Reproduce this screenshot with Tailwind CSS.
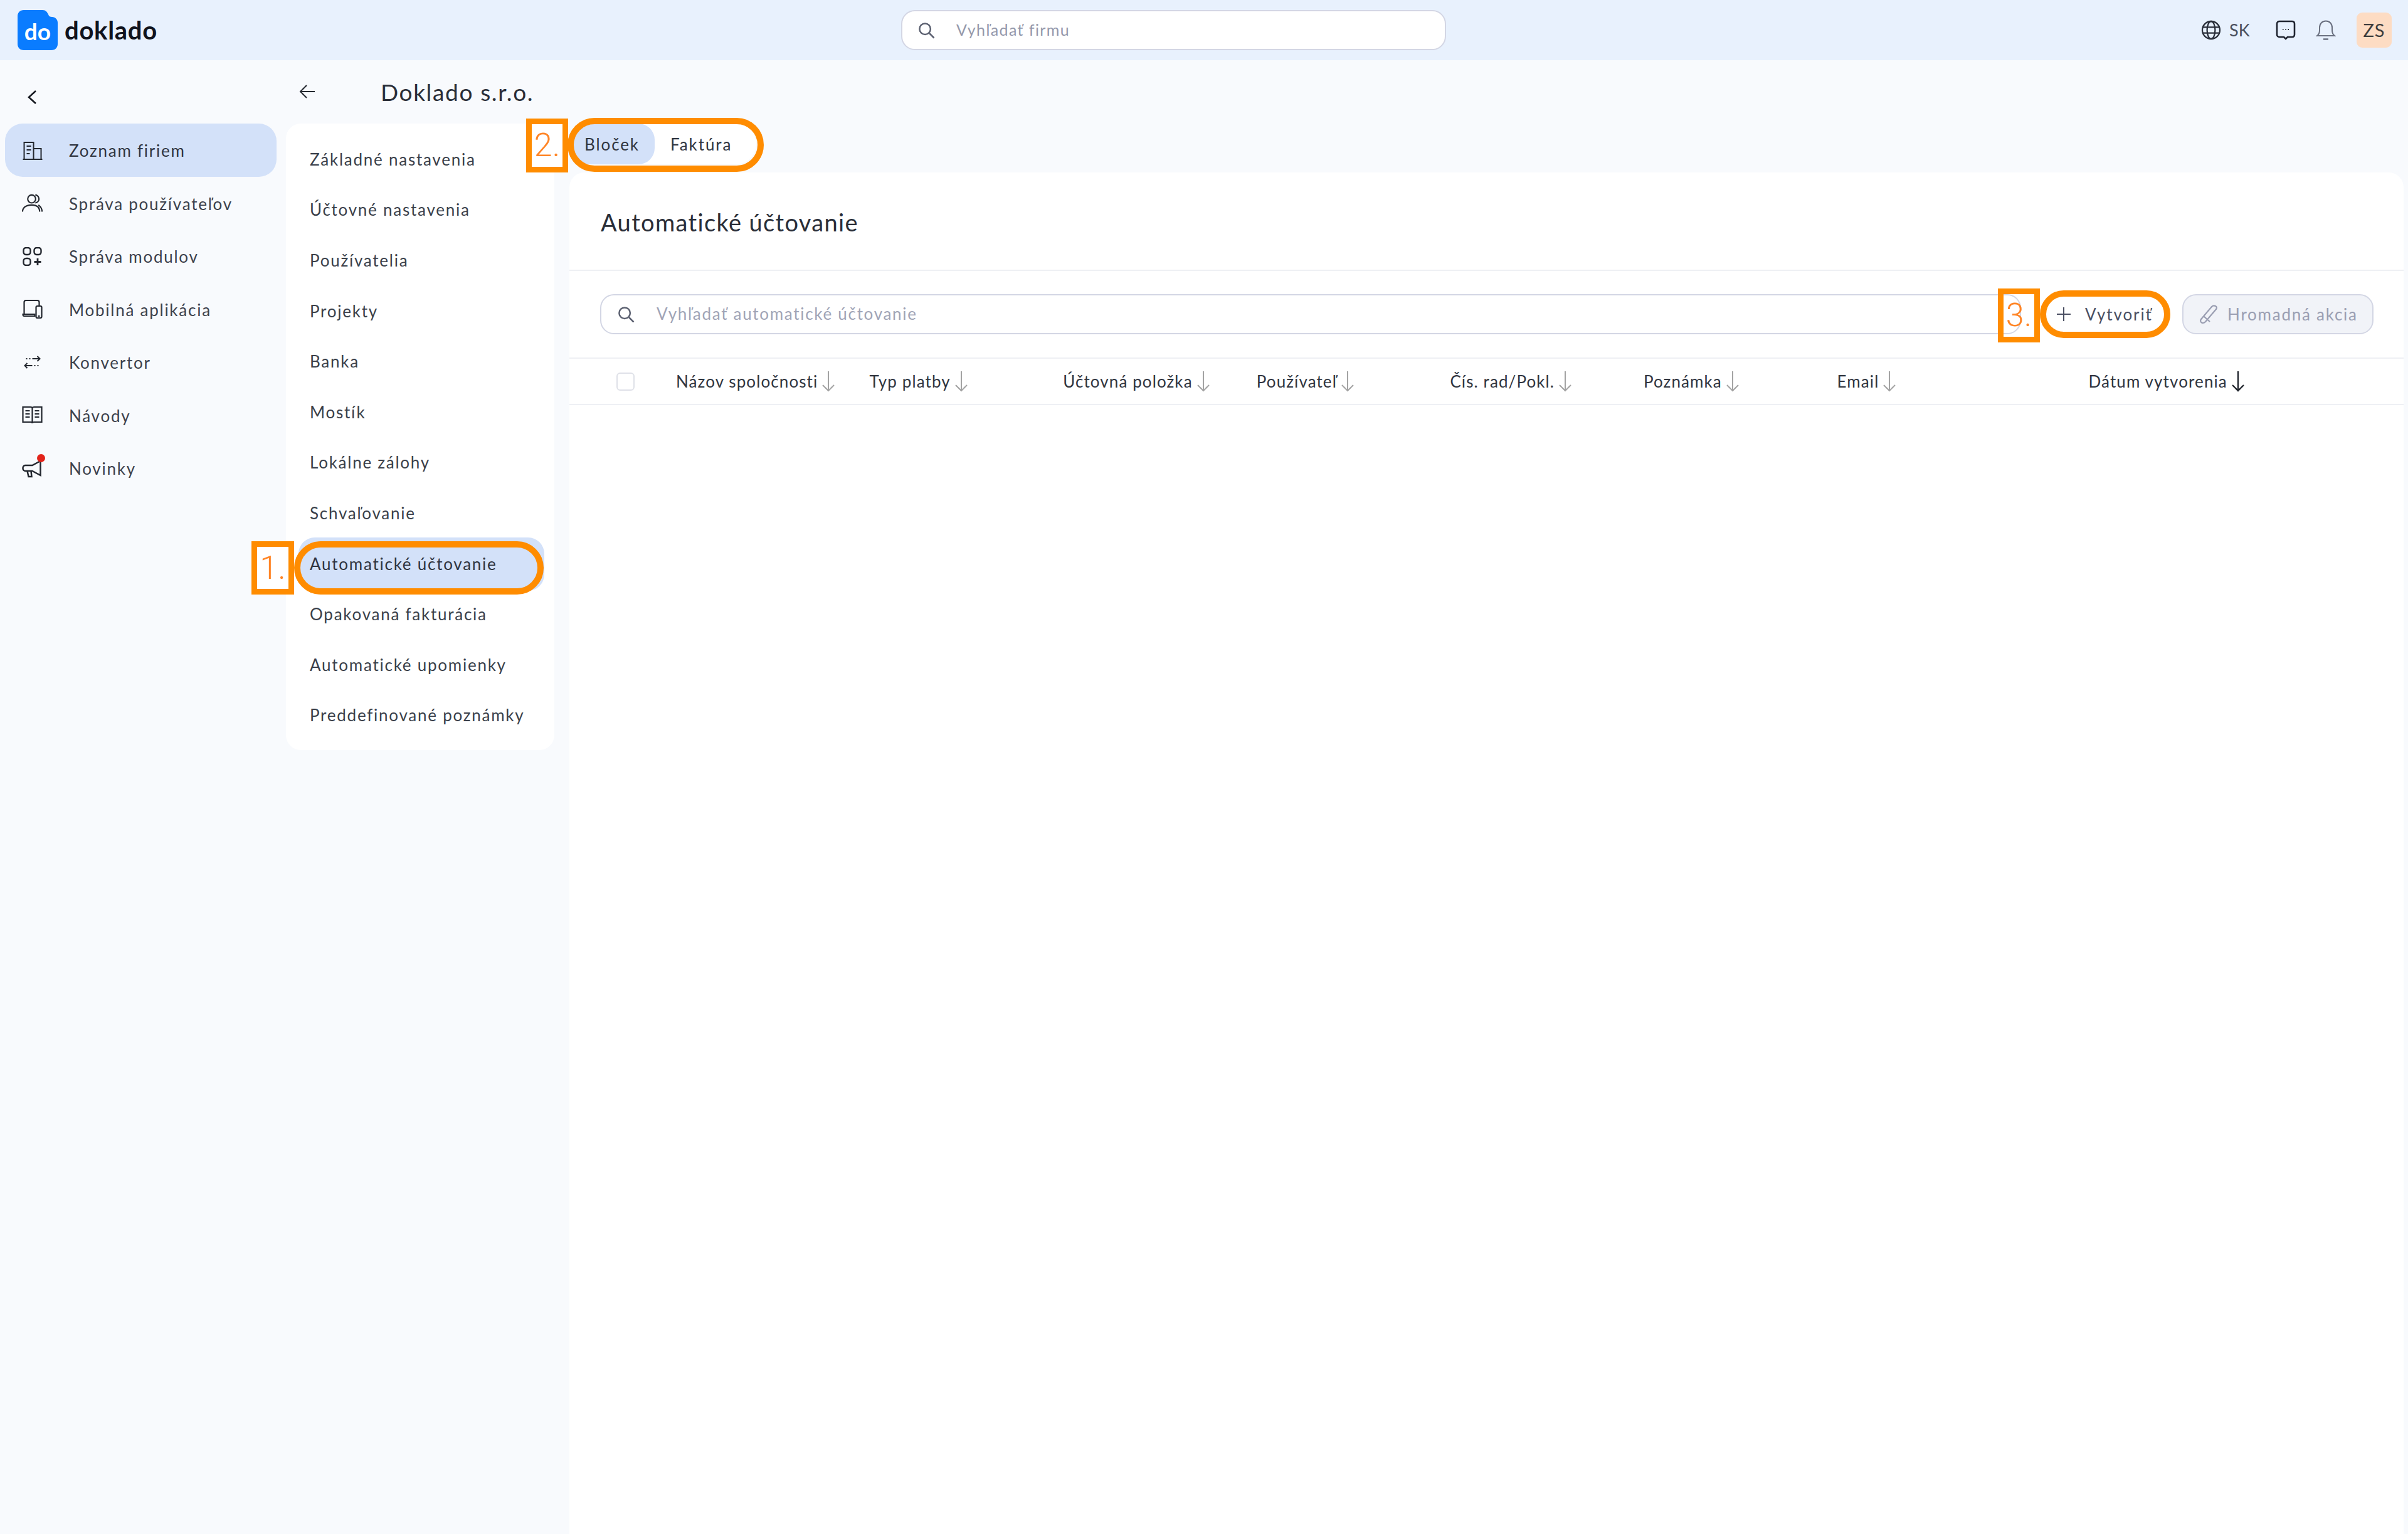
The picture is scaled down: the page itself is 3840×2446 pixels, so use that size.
<!DOCTYPE html>
<html lang="sk"><head><meta charset="utf-8"><title>Doklado</title>
<script src="https://cdn.jsdelivr.net/npm/@tailwindcss/browser@4"></script></head>
<body class="m-0 bg-[#f8fafd] font-['Lato','Noto_Sans',sans-serif] text-[#30353f]">
<div class="relative w-[3840px] h-[2446px] overflow-hidden flex flex-col">

<header class="h-[96px] shrink-0 bg-[#e8f1fd] flex items-center pl-[28px] pr-[26px]">
  <div class="w-[409px] shrink-0 flex items-center gap-[11px]">
    <div class="relative w-[64px] h-[64px]">
      <svg viewBox="0 0 64 64" class="w-[64px] h-[64px]"><path fill="#0a7cff" d="M10 0h30c5 0 7 3 9 7 1 3 3 4 6 4 5 0 9 4 9 9v34c0 6-4 10-10 10H10C4 64 0 60 0 54V10C0 4 4 0 10 0z"/></svg>
      <span class="absolute inset-0 flex items-center justify-center text-white text-[37px] font-bold leading-none pt-[3px]">do</span>
    </div>
    <span class="text-[40px] font-bold tracking-[0.7px] text-[#10131c] leading-none">doklado</span>
  </div>
  <div class="w-[869px] h-[64px] bg-white rounded-[22px] border-2 border-[#d3d6e4] flex items-center pl-[23px] absolute left-[1437px]">
    <svg viewBox="0 0 24 24" class="w-[30px] h-[30px] text-[#5b6070]" fill="none" stroke="currentColor" stroke-width="2"><circle cx="10.5" cy="10.5" r="7"/><path d="M16 16l6 6"/></svg>
    <span class="ml-[33px] text-[25px] tracking-[1.4px] text-[#9498ab]">Vyhľadať firmu</span>
  </div>
  <div class="ml-auto flex items-center">
    <svg viewBox="0 0 24 24" class="w-[32px] h-[32px] text-[#2a2f3a]" fill="none" stroke="currentColor" stroke-width="1.7"><circle cx="12" cy="12" r="10.5"/><ellipse cx="12" cy="12" rx="4.8" ry="10.5"/><path d="M2 8.5h20M2 15.5h20"/></svg>
    <span class="ml-[13px] text-[27px] text-[#4a4f5c] w-[42px]">SK</span>
    <svg viewBox="0 0 32 32" class="ml-[32px] w-[32px] h-[32px] text-[#1f2430]" fill="none" stroke="currentColor" stroke-width="2.6"><path d="M6 2h20c2.500 0 4 1.500 4 4v17c0 2.500-1.500 4-4 4h-7l-3 3-3-3H6c-2.500 0-4-1.500-4-4V6c0-2.500 1.500-4 4-4z"/><path d="M11 15h1.500M15.300 15h1.500M19.500 15H21" stroke-width="2"/></svg>
    <svg viewBox="0 0 32 32" class="ml-[32px] w-[32px] h-[32px] text-[#6a7080]" fill="none" stroke="currentColor" stroke-width="2"><path d="M2 25c3-2 4-5 4-9v-4C6 6 10 1.500 16 1.500S26 6 26 12v4c0 4 1 7 4 9z"/><path d="M12 30.500h8" stroke-width="2.500"/></svg>
    <div class="ml-[33px] w-[56px] h-[56px] rounded-[9px] bg-[#fddcc3] flex items-center justify-center text-[29px] tracking-[1px] text-[#3d3d3d]">ZS</div>
  </div>
</header>

<div class="flex-1 flex min-h-0">
  <aside class="w-[455px] shrink-0 pl-[8px] pr-[14px]">
    <div class="h-[101px] flex items-center pl-[35px]">
      <svg viewBox="0 0 16 24" class="w-[16px] h-[24px] mt-[16px] text-[#14171f]" fill="none" stroke="currentColor" stroke-width="2.600"><path d="M14 2L3 12l11 10"/></svg>
    </div>
    <nav class="text-[26px] tracking-[1.75px] text-[#3c414c]">
      <div class="h-[85px] rounded-[28px] bg-[#d3e1f9] flex items-center pl-[27px] gap-[42px] text-[#2f3440]">
        <svg viewBox="0 0 32 30" class="w-[33px] h-[30px] shrink-0 text-[#23272f]" fill="none" stroke="currentColor" stroke-width="2"><path d="M1 29h31M3 29V2h15v27M18 12h12v17M7 8h7M7 14h7M7 20h5"/></svg>
        <span class="pt-[2px]">Zoznam firiem</span></div>
      <div class="h-[84.500px] flex items-center pl-[27px] gap-[42px]">
        <svg viewBox="0 0 34 30" class="w-[33px] h-[30px] shrink-0 text-[#23272f]" fill="none" stroke="currentColor" stroke-width="2.200"><circle cx="16" cy="8" r="6.500"/><path d="M1 29c0-7 6-11 15-11s13 4 13 11M22 1.500c3 0 6 3 6 6.500s-3 6-6 6.500M27 18c3 2 6 6 6 11"/></svg>
        <span class="pt-[2px]">Správa používateľov</span></div>
      <div class="h-[84.500px] flex items-center pl-[27px] gap-[42px]">
        <svg viewBox="0 0 32 30" class="w-[33px] h-[30px] shrink-0 text-[#23272f]" fill="none" stroke="currentColor" stroke-width="2.400"><rect x="2" y="1" width="11" height="11" rx="4"/><rect x="19" y="1" width="11" height="11" rx="4"/><rect x="2" y="18" width="11" height="11" rx="4"/><path d="M24.500 18v11M19 23.500h11" stroke-width="2.800"/></svg>
        <span class="pt-[2px]">Správa modulov</span></div>
      <div class="h-[84.500px] flex items-center pl-[27px] gap-[42px]">
        <svg viewBox="0 0 32 30" class="w-[33px] h-[30px] shrink-0 text-[#23272f]" fill="none" stroke="currentColor" stroke-width="2.200"><path d="M3 22V4c0-2 1-3 3-3h18c2 0 3 1 3 3v5M1 23h19v3H3c-1.500 0-2-1-2-3z"/><rect x="22" y="10" width="9" height="19" rx="2"/><path d="M25 26h3"/></svg>
        <span class="pt-[2px]">Mobilná aplikácia</span></div>
      <div class="h-[84.500px] flex items-center pl-[27px] gap-[42px]">
        <svg viewBox="0 0 32 30" class="w-[33px] h-[30px] shrink-0 text-[#23272f]" fill="none" stroke="currentColor" stroke-width="2"><path d="M6 9h2M11 9h2M16 9h12M24 5l4 4-4 4M26 20h-2M21 20h-2M16 20H4M8 16l-4 4 4 4"/></svg>
        <span class="pt-[2px]">Konvertor</span></div>
      <div class="h-[84.500px] flex items-center pl-[27px] gap-[42px]">
        <svg viewBox="0 0 32 30" class="w-[33px] h-[30px] shrink-0 text-[#23272f]" fill="none" stroke="currentColor" stroke-width="2.200"><path d="M1 2h12c2 0 3 1 3 2v24c0-1-1-2-3-2H1zM31 2H19c-2 0-3 1-3 2v24c0-1 1-2 3-2h12zM5 8h7M5 13h7M5 18h7M20 8h7M20 13h7M20 18h7"/></svg>
        <span class="pt-[2px]">Návody</span></div>
      <div class="h-[84.500px] flex items-center pl-[27px] gap-[42px]">
        <span class="relative shrink-0 block w-[33px] h-[30px]">
          <svg viewBox="0 0 32 30" class="w-[33px] h-[30px] text-[#23272f]" fill="none" stroke="currentColor" stroke-width="2.500"><path d="M29 3v23l-13-7H5c-2 0-4-1.500-4-4v-1c0-2.500 2-4 4-4h11z"/><path d="M8 19l2 9h5l-1-9"/></svg>
          <span class="absolute -top-[8px] -right-[4px] w-[13px] h-[13px] rounded-full bg-[#e2231a]"></span>
        </span>
        <span class="pt-[2px]">Novinky</span></div>
    </nav>
  </aside>

  <section class="w-[453px] shrink-0">
    <div class="h-[101px] flex items-center pl-[22px]">
      <svg viewBox="0 0 26 24" class="w-[26px] h-[24px] -mt-[2px] text-[#23272f]" fill="none" stroke="currentColor" stroke-width="2"><path d="M12 2L2 12l10 10M2 12h23"/></svg>
      <span class="ml-[104px] text-[37px] tracking-[1.65px] text-[#2a2e38]">Doklado s.r.o.</span>
    </div>
    <div class="ml-[1px] w-[428px] h-[999px] bg-white rounded-[24px] pt-[17px] pl-[20px] text-[26px] tracking-[1.75px] text-[#3a3f4a]">
      <div class="h-[80.600px] w-[392px] flex items-center pl-[18px]">Základné nastavenia</div>
      <div class="h-[80.600px] w-[392px] flex items-center pl-[18px]">Účtovné nastavenia</div>
      <div class="h-[80.600px] w-[392px] flex items-center pl-[18px]">Používatelia</div>
      <div class="h-[80.600px] w-[392px] flex items-center pl-[18px]">Projekty</div>
      <div class="h-[80.600px] w-[392px] flex items-center pl-[18px]">Banka</div>
      <div class="h-[80.600px] w-[392px] flex items-center pl-[18px]">Mostík</div>
      <div class="h-[80.600px] w-[392px] flex items-center pl-[18px]">Lokálne zálohy</div>
      <div class="h-[80.600px] w-[392px] flex items-center pl-[18px]">Schvaľovanie</div>
      <div class="h-[85px] -mt-[2px] mb-[-2.400px] w-[392px] flex items-center pl-[18px] rounded-[26px] bg-[#d3e1f9] text-[#2f3440]">Automatické účtovanie</div>
      <div class="h-[80.600px] w-[392px] flex items-center pl-[18px]">Opakovaná fakturácia</div>
      <div class="h-[80.600px] w-[392px] flex items-center pl-[18px]">Automatické upomienky</div>
      <div class="h-[80.600px] w-[392px] flex items-center pl-[18px]">Preddefinované poznámky</div>
    </div>
  </section>

  <main class="w-[2925px] shrink-0 flex flex-col">
    <div class="h-[101px] shrink-0"></div>
    <div class="h-[78px] shrink-0">
      <div class="inline-flex h-[65px] text-[26px] tracking-[1.9px] text-[#30353f] bg-white rounded-[33px]">
        <div class="w-[136px] rounded-[26px] bg-[#d3e1f9] flex items-center justify-center pt-[1px]">Bloček</div>
        <div class="w-[162px] flex items-center pl-[25px] pt-[1px]">Faktúra</div>
      </div>
    </div>
    <div class="flex-1 bg-white rounded-t-[24px] flex flex-col">
      <div class="h-[157px] border-b-2 border-[#eef0f4] flex items-center pl-[50px] pt-[3px] text-[38px] tracking-[1.35px] text-[#2a2e38]">Automatické účtovanie</div>
      <div class="h-[140px] border-b-2 border-[#eef0f4] flex items-center pl-[49px]">
        <div class="w-[2266px] h-[64px] rounded-[22px] border-2 border-[#d3d6e4] flex items-center pl-[24px]">
          <svg viewBox="0 0 24 24" class="w-[30px] h-[30px] text-[#5b6070]" fill="none" stroke="currentColor" stroke-width="2"><circle cx="10.500" cy="10.500" r="7"/><path d="M16 16l6 6"/></svg>
          <span class="ml-[34px] -mt-[1px] text-[26px] tracking-[1.7px] text-[#a0a4b6]">Vyhľadať automatické účtovanie</span>
        </div>
        <div class="ml-[32px] w-[184px] h-[64px] flex items-center pl-[24px] text-[26px] tracking-[1.9px] text-[#4a4f62] shrink-0">
          <svg viewBox="0 0 24 24" class="w-[24px] h-[24px] text-[#4a4f62]" fill="none" stroke="currentColor" stroke-width="2"><path d="M12 1v22M1 12h22"/></svg>
          <span class="ml-[22px]">Vytvoriť</span>
        </div>
        <div class="ml-[41px] w-[305px] h-[64px] rounded-[22px] border-2 border-[#d3d6e4] bg-[#f1f3f8] flex items-center pl-[24px] text-[26px] tracking-[1.75px] text-[#9a9eb2] shrink-0">
          <svg viewBox="0 0 32 32" class="w-[32px] h-[32px] text-[#9a9eb2]" fill="none" stroke="currentColor" stroke-width="2.200"><path d="M4 24L21 4c2-2 4-2 6-1s2.500 3 1 5L11 28c-2 2-4 2.500-6 1.500S2.500 26 4 24zM8 19l10 9"/></svg>
          <span class="ml-[14px]">Hromadná akcia</span>
        </div>
      </div>
      <div class="h-[74px] border-b-2 border-[#eef0f4] grid grid-cols-[170px_repeat(6,308.6px)_401px_1fr] items-center text-[26px] tracking-[1.1px] text-[#30353f]">
        <div class="pl-[75px]"><div class="w-[29px] h-[29px] rounded-[6px] border-2 border-[#dfe1e8] bg-white"></div></div>
        <div class="flex items-center gap-[6px]">Názov spoločnosti<svg viewBox="0 0 22 34" class="w-[22px] h-[34px] text-[#a3a3a3]" fill="none" stroke="currentColor" stroke-width="2"><path d="M11 1v31M2 23l9 9 9-9"/></svg></div>
        <div class="flex items-center gap-[6px]">Typ platby<svg viewBox="0 0 22 34" class="w-[22px] h-[34px] text-[#a3a3a3]" fill="none" stroke="currentColor" stroke-width="2"><path d="M11 1v31M2 23l9 9 9-9"/></svg></div>
        <div class="flex items-center gap-[6px]">Účtovná položka<svg viewBox="0 0 22 34" class="w-[22px] h-[34px] text-[#a3a3a3]" fill="none" stroke="currentColor" stroke-width="2"><path d="M11 1v31M2 23l9 9 9-9"/></svg></div>
        <div class="flex items-center gap-[6px]">Používateľ<svg viewBox="0 0 22 34" class="w-[22px] h-[34px] text-[#a3a3a3]" fill="none" stroke="currentColor" stroke-width="2"><path d="M11 1v31M2 23l9 9 9-9"/></svg></div>
        <div class="flex items-center gap-[6px]">Čís. rad/Pokl.<svg viewBox="0 0 22 34" class="w-[22px] h-[34px] text-[#a3a3a3]" fill="none" stroke="currentColor" stroke-width="2"><path d="M11 1v31M2 23l9 9 9-9"/></svg></div>
        <div class="flex items-center gap-[6px]">Poznámka<svg viewBox="0 0 22 34" class="w-[22px] h-[34px] text-[#a3a3a3]" fill="none" stroke="currentColor" stroke-width="2"><path d="M11 1v31M2 23l9 9 9-9"/></svg></div>
        <div class="flex items-center gap-[6px]">Email<svg viewBox="0 0 22 34" class="w-[22px] h-[34px] text-[#a3a3a3]" fill="none" stroke="currentColor" stroke-width="2"><path d="M11 1v31M2 23l9 9 9-9"/></svg></div>
        <div class="flex items-center gap-[6px]">Dátum vytvorenia<svg viewBox="0 0 22 34" class="w-[22px] h-[34px] text-[#23272f]" fill="none" stroke="currentColor" stroke-width="2.400"><path d="M11 1v31M2 23l9 9 9-9"/></svg></div>
      </div>
    </div>
  </main>
</div>

<!-- annotation overlays -->
<div class="absolute left-[401px] top-[863px] w-[68px] h-[85px] border-[9px] border-[#ff8c00] bg-white flex items-center justify-center font-['Roboto',sans-serif] font-light text-[52px] text-[#ff8526] leading-none">1.</div>
<div class="absolute left-[469px] top-[863px] w-[398px] h-[85px] border-[10px] border-[#ff8c00] rounded-[43px]"></div>
<div class="absolute left-[839px] top-[189px] w-[67px] h-[86px] border-[9px] border-[#ff8c00] bg-white flex items-center justify-center font-['Roboto',sans-serif] font-light text-[52px] text-[#ff8526] leading-none">2.</div>
<div class="absolute left-[905px] top-[188px] w-[313px] h-[86px] border-[10px] border-[#ff8c00] rounded-[43px]"></div>
<div class="absolute left-[3186px] top-[460px] w-[67px] h-[86px] border-[9px] border-[#ff8c00] flex items-center justify-center font-['Roboto',sans-serif] font-light text-[52px] text-[#ff8526] leading-none">3.</div>
<div class="absolute left-[3253px] top-[463px] w-[208px] h-[76px] border-[10px] border-[#ff8c00] rounded-[38px]"></div>
</div>
</body></html>
